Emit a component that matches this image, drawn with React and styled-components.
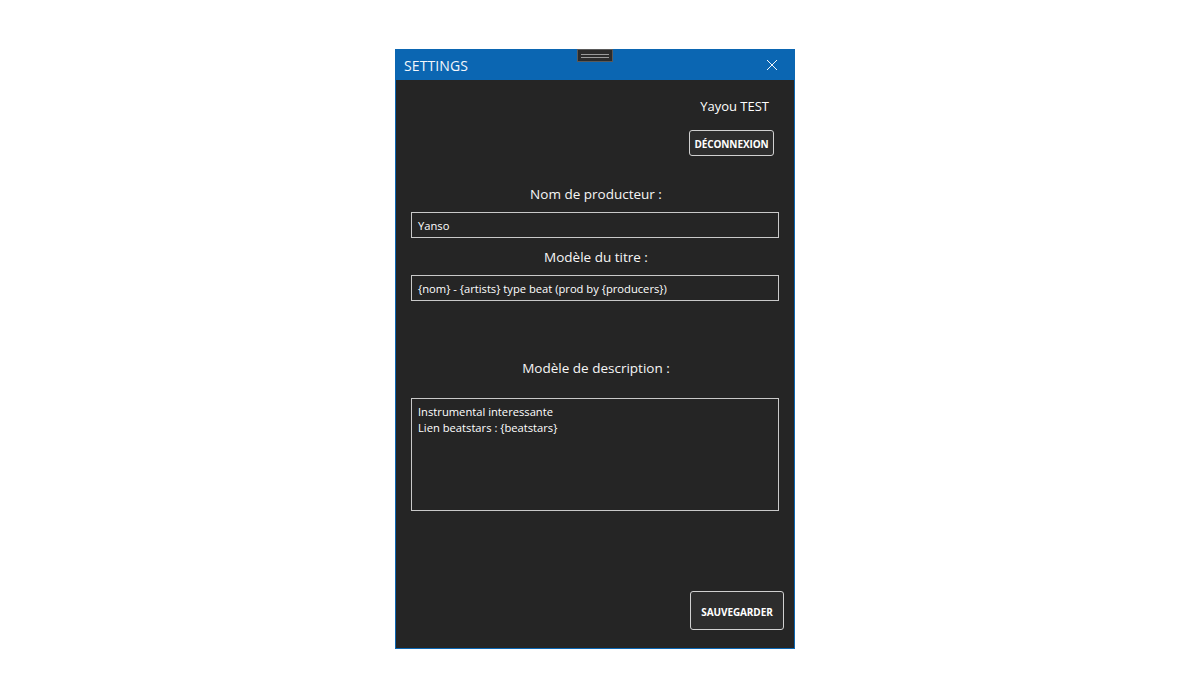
import React from "react";
import styled, { createGlobalStyle } from "styled-components";

const Global = createGlobalStyle`
  html, body { margin: 0; padding: 0; background: #ffffff; }
  body { font-family: "Open Sans", "Noto Sans", sans-serif; }
`;

const Page = styled.div`
  width: 1200px;
  height: 695px;
  display: flex;
  justify-content: flex-start;
  padding: 49px 0 0 395px;
  box-sizing: border-box;
`;

const Window = styled.div`
  position: relative;
  width: 400px;
  height: 600px;
  box-sizing: border-box;
  border: 1px solid #0b66b2;
  background: #252525;
  display: flex;
  flex-direction: column;
`;

const TitleBar = styled.div`
  height: 30px;
  background: #0b66b2;
  display: flex;
  align-items: center;
  justify-content: space-between;
  padding: 0 16px 0 8px;
  color: #f4f7fb;
`;

const Title = styled.span`
  font-size: 14px;
  letter-spacing: 0.1px;
`;

const Grip = styled.div`
  position: absolute;
  top: -1px;
  left: 181px;
  width: 36px;
  height: 13px;
  background: #2b2b2b;
  border: 1px solid #5a5a5a;
  display: flex;
  flex-direction: column;
  justify-content: center;
  align-items: center;
  gap: 2px;
  box-sizing: border-box;
`;

const GripLine = styled.div`
  width: 28px;
  height: 1px;
  background: #9a9a9a;
`;

const Body = styled.div`
  flex: 1;
  display: flex;
  flex-direction: column;
  padding: 16px 15px 18px 15px;
`;

const UserRow = styled.div`
  display: flex;
  justify-content: flex-end;
  padding-right: 10px;
  color: #ffffff;
  font-size: 13px;
  height: 19px;
  align-items: center;
`;

const LogoutRow = styled.div`
  display: flex;
  justify-content: flex-end;
  margin-top: 15px;
  padding-right: 5px;
`;

const OutlineButton = styled.button`
  background: #2d2d2d;
  border: 1px solid #d0d0d0;
  border-radius: 3px;
  color: #ffffff;
  font-family: "Open Sans", "Noto Sans", sans-serif;
  font-weight: 700;
  font-size: ${(p) => p.$size || 10}px;
  width: ${(p) => p.$w}px;
  height: ${(p) => p.$h}px;
  padding: 2px 0 0 0;
  display: flex;
  align-items: center;
  justify-content: center;
  letter-spacing: -0.1px;
`;

const Label = styled.div`
  text-align: center;
  color: #f6f6f6;
  font-size: 13.5px;
  height: 20px;
  line-height: 20px;
  margin-top: ${(p) => p.$mt}px;
  margin-bottom: ${(p) => p.$mb}px;
  padding-left: 2px;
`;

const Field = styled.div`
  width: 368px;
  height: ${(p) => p.$h || 26}px;
  box-sizing: border-box;
  border: 1px solid #c9c9c9;
  color: #ffffff;
  font-size: 11.2px;
  line-height: 16px;
  padding: ${(p) => (p.$multi ? "5px 6px" : "5px 6px 3px 6px")};
  display: flex;
  flex-direction: column;
  justify-content: ${(p) => (p.$multi ? "flex-start" : "center")};
  white-space: nowrap;
`;

const Spacer = styled.div`
  flex: 1;
`;

const SaveRow = styled.div`
  display: flex;
  justify-content: flex-end;
  margin-right: -5px;
`;

const CloseIcon = () => (
  <svg width="12" height="12" viewBox="0 0 12 12">
    <path d="M1 1 L11 11 M11 1 L1 11" stroke="#f2f6fa" strokeWidth="1" />
  </svg>
);

export default function App() {
  return (
    <>
      <Global />
      <Page>
        <Window>
          <TitleBar>
            <Title>SETTINGS</Title>
            <CloseIcon />
          </TitleBar>
          <Grip>
            <GripLine />
            <GripLine />
          </Grip>
          <Body>
            <UserRow>Yayou TEST</UserRow>
            <LogoutRow>
              <OutlineButton $w={85} $h={26} $size={10}>DÉCONNEXION</OutlineButton>
            </LogoutRow>
            <Label $mt={28} $mb={8}>Nom de producteur :</Label>
            <Field>Yanso</Field>
            <Label $mt={9} $mb={8}>Modèle du titre :</Label>
            <Field>{"{nom} - {artists} type beat (prod by {producers})"}</Field>
            <Label $mt={57} $mb={20}>Modèle de description :</Label>
            <Field $multi $h={113}>
              <span>Instrumental interessante</span>
              <span>{"Lien beatstars : {beatstars}"}</span>
            </Field>
            <Spacer />
            <SaveRow>
              <OutlineButton $w={94} $h={39} $size={10}>SAUVEGARDER</OutlineButton>
            </SaveRow>
          </Body>
        </Window>
      </Page>
    </>
  );
}
